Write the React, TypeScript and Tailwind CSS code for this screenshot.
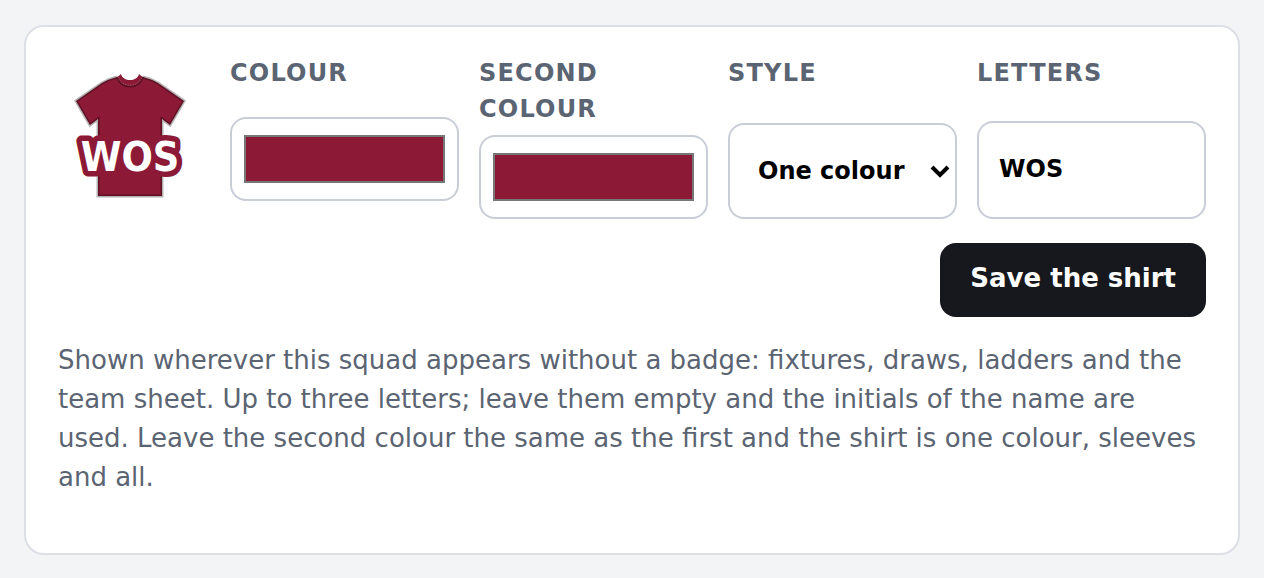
import { useState } from 'react'
import type { ReactNode } from 'react'

const OUTLINE = 'M59 12 Q51 14 44 18 L18 36 L32 60 L40 54 V131 H104 V54 L112 60 L126 36 L100 18 Q93 14 85 12'
const SHIRT = `${OUTLINE} Q83 11 81 9 C79 17 65 17 63 9 Q61 11 59 12 Z`

function Shirt({ colour, letters }: { colour: string; letters: string }) {
  return (
    <svg viewBox="0 0 144 144" className="size-36 shrink-0 self-center" role="img" aria-label="Shirt preview">
      <path d={SHIRT} fill={colour} />
      <path d={OUTLINE} fill="none" stroke="#000" strokeOpacity="0.3" strokeWidth="3" />
      <path d="M59 12 C63 25 81 25 85 12" fill="none" stroke="#000" strokeOpacity="0.4" strokeWidth="1.6" />
      <path
        d="M60 12 C64 23 80 23 84 12"
        fill="none"
        stroke="#fff"
        strokeOpacity="0.35"
        strokeWidth="0.8"
        strokeDasharray="1.4 1.2"
      />
      <text
        x="72"
        y="106"
        textAnchor="middle"
        fill="#fff"
        stroke={colour}
        strokeWidth="11"
        strokeLinejoin="round"
        paintOrder="stroke"
        className="font-['DejaVu_Sans_Condensed','DejaVu_Sans',sans-serif] text-[41px] font-bold"
      >
        {letters}
      </text>
    </svg>
  )
}

function Field({ id, label, children }: { id: string; label: string; children: ReactNode }) {
  return (
    <div className="grid content-stretch gap-2">
      <label htmlFor={id} className="text-2xl leading-9 font-bold tracking-wider text-[#5b6472] uppercase">
        {label}
      </label>
      {children}
    </div>
  )
}

const colourInput =
  'h-[84px] w-full rounded-2xl border-2 border-[#c9cdd8] bg-white px-3 py-4 [&::-webkit-color-swatch-wrapper]:p-0 [&::-webkit-color-swatch]:rounded-none [&::-webkit-color-swatch]:border-2 [&::-webkit-color-swatch]:border-[#777777]'

export default function App() {
  const [first, setFirst] = useState('#8c1936')
  const [second, setSecond] = useState('#8c1936')
  const [style, setStyle] = useState('one')
  const [letters, setLetters] = useState('WOS')

  return (
    <div className="min-h-screen bg-[#f3f4f6] px-6 pt-[25px] pb-6 font-['DejaVu_Sans',sans-serif]">
      <form
        className="rounded-[20px] border-2 border-[#dcdfe5] bg-white px-8 pt-7 pb-14"
        onSubmit={(e) => e.preventDefault()}
      >
        <div className="flex gap-7">
          <Shirt colour={first} letters={letters} />
          <div className="grid flex-1 grid-cols-4 gap-5">
            <Field id="colour" label="Colour">
              <input
                id="colour"
                type="color"
                value={first}
                onChange={(e) => setFirst(e.target.value)}
                className={colourInput}
              />
            </Field>
            <Field id="second" label="Second colour">
              <input
                id="second"
                type="color"
                value={second}
                onChange={(e) => setSecond(e.target.value)}
                className={colourInput}
              />
            </Field>
            <Field id="style" label="Style">
              <div className="grid min-h-[72px] items-center">
                <select
                  id="style"
                  value={style}
                  onChange={(e) => setStyle(e.target.value)}
                  className="col-start-1 row-start-1 h-full w-full appearance-none rounded-2xl border-2 border-[#c9cdd8] bg-white pl-7 text-2xl font-bold text-black"
                >
                  <option value="one">One colour</option>
                  <option value="sleeves">Sleeves</option>
                </select>
                <svg
                  viewBox="0 0 20 14"
                  className="pointer-events-none col-start-1 row-start-1 mr-[7px] h-[14px] w-5 justify-self-end"
                  fill="none"
                  stroke="#000"
                  strokeWidth="4"
                  aria-hidden="true"
                >
                  <path d="M2 3 L10 11 L18 3" />
                </svg>
              </div>
            </Field>
            <Field id="letters" label="Letters">
              <input
                id="letters"
                type="text"
                maxLength={3}
                value={letters}
                onChange={(e) => setLetters(e.target.value)}
                className="min-h-[76px] w-full rounded-2xl border-2 border-[#c9cdd8] bg-white px-5 pb-0.5 text-2xl font-bold text-black"
              />
            </Field>
          </div>
        </div>
        <div className="mt-6 flex justify-end">
          <button
            type="submit"
            className="rounded-2xl bg-[#17181d] px-[30px] pt-4 pb-[19px] text-[26px] leading-[39px] font-bold text-white"
          >
            Save the shirt
          </button>
        </div>
        <p className="mt-6 text-[26px] leading-[39px] text-[#5b6472]">
          Shown wherever this squad appears without a badge: fixtures, draws, ladders and the team sheet. Up to three
          letters; leave them empty and the initials of the name are used. Leave the second colour the same as the
          first and the shirt is one colour, sleeves and all.
        </p>
      </form>
    </div>
  )
}
